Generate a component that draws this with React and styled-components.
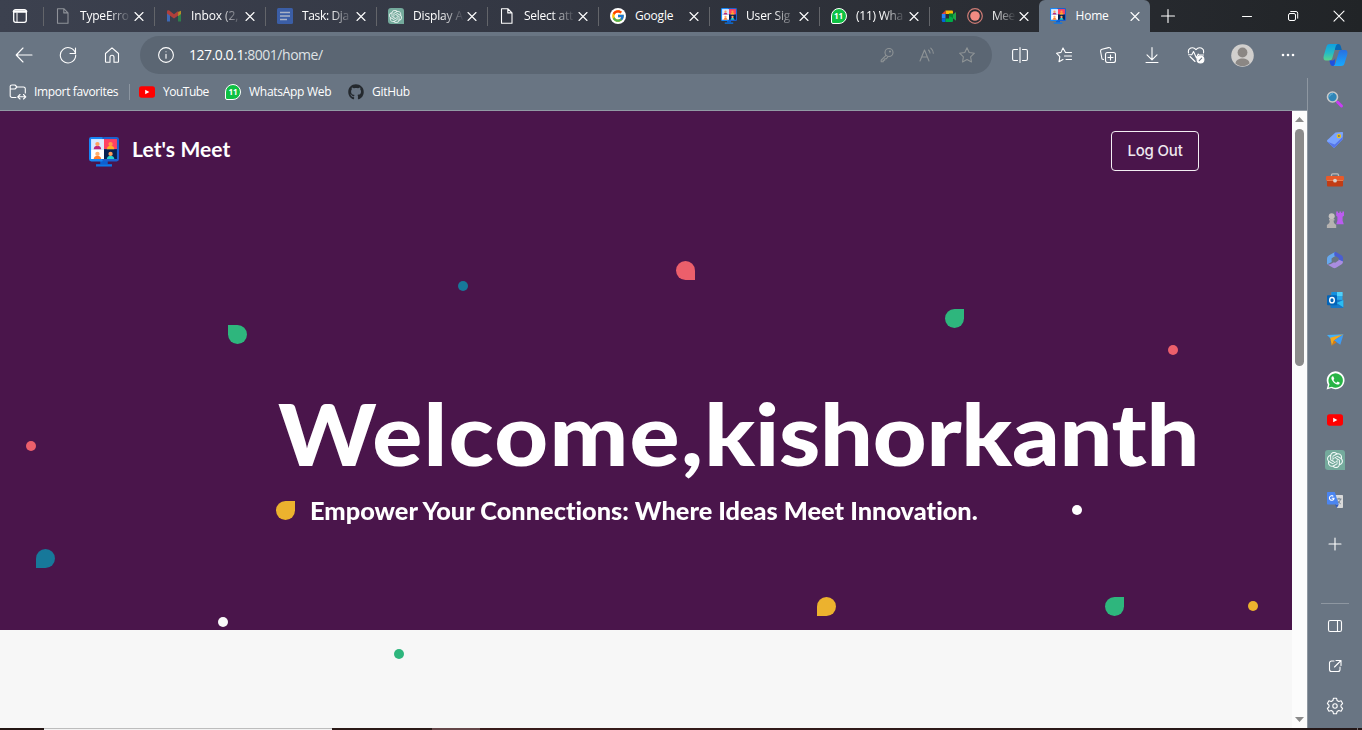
import React from "react";
import styled, { createGlobalStyle } from "styled-components";
import { FaGithub } from "react-icons/fa";
import { FcGoogle } from "react-icons/fc";
import { SiOpenai } from "react-icons/si";

const GlobalStyle = createGlobalStyle`
  *, *::before, *::after { box-sizing: border-box; }
  html, body { margin: 0; padding: 0; overflow: hidden; }
  body { font-family: "Open Sans", "Noto Sans", sans-serif; font-size: 12px; color: #fff; }
  svg { display: block; flex: none; }
  h1, p { margin: 0; }
`;

const Browser = styled.div`
  display: flex;
  flex-direction: column;
  width: 1362px;
  height: 730px;
  background: #697583;
`;

/* ---------- tab strip ---------- */
const TabStrip = styled.header`
  display: flex;
  height: 32px;
  background: linear-gradient(90deg, #3c414f 0%, #343844 35%, #2b2e35 70%, #212427 100%);
`;
const TabActions = styled.div`
  display: flex;
  align-items: center;
  width: 43px;
  padding-left: 12px;
`;
const Tab = styled.div`
  display: flex;
  align-items: center;
  flex: none;
  width: ${(p) => p.$w ?? 111}px;
  height: 32px;
  padding: 0 9px 0 ${(p) => (p.$active ? 11 : 11.5)}px;
  position: relative;
  background: ${(p) => (p.$active ? "#697583" : "transparent")};
  border-radius: ${(p) => (p.$active ? "6px 6px 0 0" : "0")};
  &::before {
    content: "";
    position: absolute;
    left: 0;
    top: 7px;
    width: 1px;
    height: 19px;
    background: ${(p) => (p.$active ? "transparent" : "#63656a")};
  }
`;
const TabTitle = styled.span`
  flex: 1;
  min-width: 0;
  margin-left: 9.5px;
  white-space: nowrap;
  line-height: 18px;
  letter-spacing: ${(p) => p.$ls ?? -0.3}px;
  mask-image: ${(p) => (p.$fade ? "linear-gradient(90deg, #000 calc(100% - 22px), transparent calc(100% + 1px))" : "none")};
`;
const TabClose = styled.span`
  display: flex;
  width: 12px;
  margin-left: 3px;
`;
const TabIcons = styled.span`
  display: flex;
  flex: none;
  gap: 10px;
`;
const NewTab = styled.div`
  display: flex;
  align-items: center;
  justify-content: center;
  width: 35px;
`;
const WindowControls = styled.div`
  display: flex;
  margin-left: auto;
`;
const WindowButton = styled.div`
  display: flex;
  align-items: center;
  justify-content: center;
  width: 46px;
`;

/* ---------- toolbar ---------- */
const Toolbar = styled.div`
  display: flex;
  align-items: center;
  height: 46px;
  padding-left: 2px;
`;
const ToolButton = styled.div`
  display: flex;
  align-items: center;
  justify-content: center;
  width: ${(p) => p.$w ?? 44}px;
  height: 38px;
`;
const AddressBar = styled.div`
  display: flex;
  align-items: center;
  width: 852px;
  height: 38px;
  margin: 0 6px 0 6px;
  padding: 0 5px 0 18px;
  border-radius: 19px;
  background: #5b6673;
`;
const Url = styled.span`
  flex: 1;
  margin-left: 15px;
  font-size: 14px;
  line-height: 20px;
  letter-spacing: -0.46px;
  color: #dfe2e5;
  b { font-weight: 400; color: #fff; }
`;

/* ---------- body ---------- */
const Body = styled.div`
  display: flex;
  height: 650px;
`;
const Main = styled.div`
  display: flex;
  flex-direction: column;
  width: 1307px;
`;
const Favorites = styled.nav`
  display: flex;
  align-items: center;
  height: 33px;
  padding: 0 0 5px 9px;
  border-bottom: 1px solid #919aa4;
`;
const Favorite = styled.div`
  display: flex;
  align-items: center;
  gap: ${(p) => p.$gap ?? 8}px;
  width: ${(p) => p.$w}px;
  white-space: nowrap;
  line-height: 18px;
  letter-spacing: ${(p) => p.$ls}px;
`;
const FavDivider = styled.span`
  width: 1px;
  height: 16px;
  margin-right: 9px;
  background: #8b95a0;
`;
const Viewport = styled.div`
  display: flex;
  height: 617px;
`;
const Page = styled.main`
  position: relative;
  width: 1292px;
  background: #f7f7f7;
`;
const Hero = styled.section`
  height: 519px;
  background: #4a154b;
`;
const SiteHeader = styled.div`
  display: flex;
  align-items: center;
  justify-content: space-between;
  height: 60px;
  padding: 20px 93px 0 89px;
`;
const Brand = styled.div`
  display: flex;
  align-items: center;
  gap: 13px;
  padding-top: 1px;
  font: 700 21px/30px Lato, sans-serif;
  letter-spacing: 0.1px;
`;
const BrandName = styled.span`
  padding-bottom: 5px;
`;
const LogOut = styled.div`
  display: flex;
  align-items: center;
  justify-content: center;
  width: 88px;
  height: 40px;
  border: 1px solid #f3eef3;
  border-radius: 4px;
  font: 500 15px/20px Inter, sans-serif;
  letter-spacing: -0.2px;
  color: #eee8ee;
`;
const Welcome = styled.h1`
  margin: 207px 0 0 278px;
  font: 900 86px/110px Lato, sans-serif;
  font-variant-ligatures: none;
  letter-spacing: 1.2px;
  white-space: nowrap;
  transform: scaleX(1.086);
  transform-origin: 0 0;
`;
const UserName = styled.span`
  letter-spacing: -0.25px;
`;
const Tagline = styled.p`
  margin: 7px 0 0 310px;
  font: 900 24px/32px Lato, sans-serif;
  font-variant-ligatures: none;
  white-space: nowrap;
  transform: scaleX(1.056);
  transform-origin: 0 0;
`;
const corners = { tl: "0 50% 50% 50%", tr: "50% 0 50% 50%", br: "50% 50% 0 50%", bl: "50% 50% 50% 0" };
const Confetti = styled.i`
  position: absolute;
  left: ${(p) => p.$x}px;
  top: ${(p) => p.$y}px;
  width: ${(p) => (p.$corner ? 19 : 10)}px;
  height: ${(p) => (p.$corner ? 19 : 10)}px;
  background: ${(p) => p.$color};
  border-radius: ${(p) => (p.$corner ? corners[p.$corner] : "50%")};
`;
const Scrollbar = styled.div`
  display: flex;
  flex-direction: column;
  align-items: center;
  width: 15px;
  padding: 6px 0 6px;
  background: #fcfcfc;
`;
const Thumb = styled.div`
  width: 9px;
  height: 237px;
  margin: 7px 0 auto;
  border-radius: 5px;
  background: #8b8b8b;
`;

/* ---------- sidebar ---------- */
const Sidebar = styled.aside`
  display: flex;
  flex-direction: column;
  align-items: center;
  width: 55px;
  padding-top: 2px;
  border-left: 1px solid #8e97a1;
`;
const SideItem = styled.div`
  display: flex;
  align-items: center;
  justify-content: center;
  width: 40px;
  height: 40px;
`;
const SideRule = styled.div`
  width: 28px;
  height: 1px;
  margin: 39px 0 2px;
  background: #8e97a1;
`;
const SideAdd = styled(SideItem)`
  margin-top: 4px;
`;
const GptTile = styled.span`
  display: flex;
  align-items: center;
  justify-content: center;
  width: ${(p) => p.$s}px;
  height: ${(p) => p.$s}px;
  border-radius: 3px 3px 0 3px;
  background: #74aa9c;
`;
const GoogleTile = styled.span`
  display: flex;
  align-items: center;
  justify-content: center;
  width: 16px;
  height: 16px;
  border-radius: 50%;
  background: #fff;
`;

/* ---------- taskbar edge ---------- */
const Taskbar = styled.footer`
  display: flex;
  height: 2px;
`;
const TaskSegment = styled.span`
  width: ${(p) => p.$w}px;
  background: ${(p) => p.$c};
`;

/* ---------- icons ---------- */
const Line = ({ s = 16, w = 1.1, c = "#fff", children }) => (
  <svg width={s} height={s} viewBox={`0 0 ${s} ${s}`} fill="none" stroke={c} strokeWidth={w} strokeLinecap="round" strokeLinejoin="round">
    {children}
  </svg>
);
const CloseIcon = () => (
  <Line s={12}><path d="M2 2.500l8 8M10 2.500l-8 8" /></Line>
);
const FileIcon = ({ c }) => (
  <Line c={c}><path d="M2.500.7h6.300l4.200 4.200v10.400H2.500zM8.800.7v4.200H13" /></Line>
);
const GmailIcon = () => (
  <svg width="16" height="16" viewBox="0 0 16 16">
    <path d="M1 4v9.5h3V7z" fill="#3f69b4" />
    <path d="M12 7v6.5h3V4z" fill="#2f7d4b" />
    <path d="M12 4l3-1.2V6l-3 2.3z" fill="#b58d28" />
    <path d="M1 3.5C1 2.3 2.6 2 3.5 2.8L8 6.2l4.2-3.3v4.6L8 10.6 1 5.5z" fill="#b03f3b" />
  </svg>
);
const DocsIcon = () => (
  <svg width="16" height="16" viewBox="0 0 16 16">
    <rect width="16" height="16" rx="1.5" fill="#3b5ea6" />
    <path d="M3 4.500h10M3 8h10M3 11.500h7" stroke="#a9b2c6" strokeWidth="1.500" />
  </svg>
);
const MeetingIcon = ({ s = 16 }) => (
  <svg width={s} height={s} viewBox="0 0 32 32">
    <path d="M12 24h8v5H12z" fill="#0b5fd0" />
    <path d="M7.500 29h17v2.500H7.500z" fill="#0a78ea" />
    <rect x="0" y="0" width="16" height="26" rx="2.500" fill="#1787f5" />
    <rect x="14" y="0" width="18" height="26" rx="2.500" fill="#1b5fce" />
    <path d="M2.200 2.200H16V13H2.200z" fill="#dbeaff" />
    <path d="M16 2.200h13.800V13H16z" fill="#ff4162" />
    <path d="M2.200 13H16v10.500H2.200z" fill="#fff" />
    <path d="M16 13h13.800v10.500H16z" fill="#061f50" />
    <path d="M5 13c0-4.800 8-4.800 8 0z" fill="#b8267b" />
    <path d="M19 13c0-4.800 8-4.800 8 0z" fill="#ffb020" />
    <path d="M5 23.500c0-4.800 8-4.800 8 0z" fill="#ff7d2b" />
    <path d="M19 23.500c0-4.800 8-4.800 8 0z" fill="#23d2d0" />
    <circle cx="9" cy="7.500" r="2.300" fill="#ffa05c" />
    <circle cx="23" cy="7.500" r="2.300" fill="#ff9a45" />
    <circle cx="9" cy="18" r="2.300" fill="#ffb070" />
    <circle cx="23" cy="18" r="2.300" fill="#ffa05c" />
  </svg>
);
const WaBadge = styled.span`
  display: flex;
  flex: none;
  align-items: center;
  justify-content: center;
  width: 16px;
  height: 16px;
  border: 1.5px solid #fff;
  border-radius: 50% 50% 50% 2px;
  background: #0ec143;
  font: 700 8px/12px "Open Sans", sans-serif;
  letter-spacing: 0;
`;
const MeetIcon = () => (
  <svg width="16" height="16" viewBox="0 0 16 16">
    <path d="M4.500 2.500H11a1 1 0 011 1V6H4.500z" fill="#fbbc04" />
    <path d="M4.500 2.500V6H.8z" fill="#ea4335" />
    <path d="M.8 6h3.700v4.500H.8z" fill="#2684fc" />
    <path d="M.8 10.500h3.700v3.500H2a1.200 1.200 0 01-1.200-1.200z" fill="#0066da" />
    <path d="M4.500 10.500H8V8h4v5a1 1 0 01-1 1H4.500z" fill="#00ac47" />
    <path d="M8 5.500h4V10l-4-2z" fill="#00832d" />
    <path d="M12 6.500l3-2.600v8.800l-3-2.500z" fill="#1fa54a" />
  </svg>
);
const RecordIcon = () => (
  <svg width="16" height="16" viewBox="0 0 16 16">
    <circle cx="8" cy="8" r="7.300" fill="none" stroke="#cf7c75" strokeWidth="1.200" />
    <circle cx="8" cy="8" r="4.800" fill="#f28b82" />
  </svg>
);
const YouTubeIcon = () => (
  <svg width="16" height="16" viewBox="0 0 16 16">
    <rect y="2.300" width="16" height="11.400" rx="2.600" fill="#f00" />
    <path d="M6.200 5.700v4.600L10.300 8z" fill="#fff" />
  </svg>
);
const Avatar = () => (
  <svg width="23" height="23" viewBox="0 0 23 23">
    <circle cx="11.500" cy="11.500" r="11.300" fill="#d1cfcd" />
    <circle cx="11.500" cy="8.500" r="4.900" fill="#8b8784" />
    <path d="M4.500 19.500c0-6.800 14-6.800 14 0-3.800 3.400-10.200 3.400-14 0z" fill="#8b8784" />
  </svg>
);
const Copilot = () => (
  <svg width="25" height="24" viewBox="0 0 25 24">
    <defs>
      <linearGradient id="cpA" x1="0" y1="0" x2="0" y2="1">
        <stop offset="0" stopColor="#0f9fe0" /><stop offset=".5" stopColor="#22b9c9" /><stop offset="1" stopColor="#58d58b" />
      </linearGradient>
      <linearGradient id="cpB" x1="0" y1="0" x2="0" y2="1">
        <stop offset="0" stopColor="#2a6fe0" /><stop offset="1" stopColor="#16a9ff" />
      </linearGradient>
    </defs>
    <path d="M12 1h3c2 0 2.500 1 3 3l.8 3H12z" fill="#0868b5" />
    <path d="M7 1h8c-1.300.3-2 1.200-2.500 3l-3 10.500c-.6 2.200-1.400 3-3 3H3C.8 17.500.1 15.500.7 13L3.500 3.500C4 1.800 5 1 7 1z" fill="url(#cpA)" />
    <path d="M6.400 17.500H9c1.700 0 2.600-.7 3.200-2.300L11.500 23H10c-2 0-2.500-1-3-3z" fill="#1f50e0" />
    <path d="M18 23h-8c1.300-.3 2-1.200 2.500-3l3-10c.6-2.200 1.400-3 3-3H22c2.200 0 2.900 2 2.300 4.500L21.500 20.500C21 22.200 20 23 18 23z" fill="url(#cpB)" />
  </svg>
);
const SearchIcon = () => (
  <svg width="18" height="18" viewBox="0 0 18 18">
    <path d="M11.500 11l4 4" stroke="#c93cf5" strokeWidth="3" strokeLinecap="round" />
    <circle cx="6.500" cy="6" r="5" fill="#2f86b8" stroke="#c9c9c9" strokeWidth="1.600" />
    <path d="M3.600 5.500A3.300 3.300 0 017 2.700" stroke="#67b4dc" fill="none" />
  </svg>
);
const TagIcon = () => (
  <svg width="18" height="18" viewBox="0 0 18 18">
    <path d="M9.500 1.600L16 1c.7 0 1 .3 1 1l-.5 6.500-7.300 7.600c-.8.8-1.600.8-2.400 0L1.600 11c-.8-.8-.8-1.500 0-2.300z" fill="#7aa4ff" />
    <path d="M1.500 10.800l5.300 5.300c.8.8 1.600.8 2.400 0l7.300-7.600.2-2.500-8 7.500z" fill="#5676ea" />
    <circle cx="12.900" cy="5" r="1.600" fill="#5f7081" stroke="#f2c115" strokeWidth="1.300" />
  </svg>
);
const ToolboxIcon = () => (
  <svg width="18" height="18" viewBox="0 0 18 18">
    <path d="M5.500 5.500V4c0-.8.400-1.200 1.200-1.200h4.600c.8 0 1.200.4 1.200 1.200v1.500" fill="none" stroke="#bbb" strokeWidth="1.300" />
    <rect y="5" width="18" height="4.700" rx="1.200" fill="#e75a2b" />
    <path d="M1 9.700h16v4.600c0 .8-.4 1.200-1.200 1.200H2.200c-.8 0-1.200-.4-1.200-1.200z" fill="#c23c14" />
    <path d="M1 9.500h16" stroke="#f58a58" strokeWidth=".7" />
    <circle cx="9" cy="9.700" r="1.900" fill="#d8d2ce" />
  </svg>
);
const GamesIcon = () => (
  <svg width="18" height="18" viewBox="0 0 18 18">
    <path d="M10.200.5h1.900v1.500h1.300V.5h1.800v1.500h1.100V.5H18v4.300l-1.400 1v4l1.200 3.400h-7.600l1.200-3.400v-4l-1.200-1z" fill="#bb5cf0" />
    <circle cx="5.700" cy="5.300" r="3" fill="#c4c1bf" />
    <path d="M3 8h5.500v1.500h-.9c0 2.300.8 3.300 2.600 4.500v3H.9v-3c1.900-1.200 2.900-2.200 2.900-4.500H3z" fill="#b5b2b0" />
  </svg>
);
const M365Icon = () => (
  <svg width="18" height="18" viewBox="0 0 18 18">
    <path d="M9.500.7L3.200 4.300C1.800 5.200 1 6 1 8v5.500L5.700 11V7.400l5-3z" fill="#66a8ee" />
    <path d="M9.500.7l5.800 3.500c1.200.8 1.700 1.700 1.700 3v4.500l-4.500-2.200V7L8.300 4.500V1.200z" fill="#4a5ed0" />
    <path d="M17 10.500c0 1.600-.6 2.400-1.700 3L10 16.800c-1 .6-2 .5-3 0L1 13.300c1.500.6 3.300.3 4.700-.8l6.800-4z" fill="#a98de0" />
    <path d="M5.800 7.300L9.200 5.300l3.300 2v2.300L9.200 11.700l-3.400-1.200z" fill="#697583" />
  </svg>
);
const OutlookIcon = () => (
  <svg width="18" height="18" viewBox="0 0 18 18">
    <rect x="5.500" y="1" width="11" height="12" rx="1" fill="#28a8ea" />
    <path d="M11 1h5.500v4H11z" fill="#50d0fa" />
    <path d="M5.500 1H11v4H5.500z" fill="#1490df" />
    <path d="M4.500 8.500l12.800.5v7c0 .6-.4 1-1 1H5.500c-.6 0-1-.4-1-1z" fill="#1678c8" />
    <path d="M17.300 9v7.300L10.500 12z" fill="#2bbcf2" />
    <rect x="1" y="4.200" width="10" height="10" rx="1" fill="#0364b8" />
    <ellipse cx="6" cy="9.200" rx="2.300" ry="2.700" fill="none" stroke="#fff" strokeWidth="1.400" />
  </svg>
);
const DropIcon = () => (
  <svg width="18" height="18" viewBox="0 0 18 18">
    <path d="M1 4L17.500 3.200 5 8z" fill="#45b0f7" />
    <path d="M4.300 6.800L17.500 3.200 8 9.500 5.800 14.800z" fill="#f6a91b" />
    <path d="M8 9.500l9.500-6.300-3.200 10.600z" fill="#3f9cf3" />
    <path d="M5.800 14.800L8 9.500l2.600 1.700z" fill="#d77b10" />
  </svg>
);
const WhatsAppIcon = () => (
  <svg width="19" height="19" viewBox="0 0 19 19">
    <path d="M.6 18.400l1.300-4.700A8.900 8.900 0 115.200 17z" fill="#fff" />
    <path d="M2.600 16.400l.9-3.200a7.200 7.200 0 112.500 2.500z" fill="#28b446" />
    <path d="M6.600 5.200c-1.300.6-1.500 2-.8 3.600 1 2.200 2.800 4 5.200 4.700 1.400.4 2.600-.4 2.800-1.800l-2.100-1.100-1.100 1.200c-1.500-.6-2.500-1.600-3.100-2.900l.8-1.100-.9-2.300z" fill="#fff" />
  </svg>
);
const TranslateIcon = () => (
  <svg width="18" height="18" viewBox="0 0 18 18">
    <path d="M7 4h9c.6 0 1 .4 1 1v11c0 .6-.4 1-1 1h-5z" fill="#d9d9d9" />
    <path d="M10.500 8h5M13 6.800V8m1.500 0c-.5 2-1.500 3.500-3 4.600M11.500 9.500c.7 1.500 1.800 2.500 3.200 3.300" stroke="#6d7b86" fill="none" strokeWidth=".9" />
    <path d="M2 1h6.800l4 12.500H2c-.6 0-1-.4-1-1V2c0-.6.400-1 1-1z" fill="#4b85f0" />
    <path d="M9 13.500h3.800L10.800 17z" fill="#2e59be" />
    <path d="M7.300 5.300a2.300 2.300 0 10.700 2H5.700" stroke="#fff" fill="none" strokeWidth="1.100" />
  </svg>
);

const tabs = [
  { title: "TypeErro", icon: <FileIcon c="#8f9299" />, ls: -0.2, fade: true },
  { title: "Inbox (2,", icon: <GmailIcon />, ls: -0.1, fade: true },
  { title: "Task: Dja", icon: <DocsIcon />, ls: -0.35, fade: true },
  { title: "Display A", icon: <GptTile $s={16}><SiOpenai size={13} color="#e9f3f0" /></GptTile>, ls: -0.15, fade: true },
  { title: "Select att", icon: <FileIcon c="#fff" />, ls: -0.25, fade: true },
  { title: "Google", icon: <GoogleTile><FcGoogle size={14} /></GoogleTile>, ls: -0.2 },
  { title: "User Sig", icon: <MeetingIcon />, ls: -0.15, fade: true, w: 110 },
  { title: "(11) Wha", icon: <WaBadge>11</WaBadge>, ls: -0.25, fade: true, w: 110 },
  { title: "Mee", icon: <TabIcons><MeetIcon /><RecordIcon /></TabIcons>, ls: -0.5, fade: true, w: 110 },
];

const confetti = [
  { x: 228, y: 214, color: "#2eb67d", corner: "tl" },
  { x: 676, y: 150, color: "#ec5f6b", corner: "br" },
  { x: 945, y: 198, color: "#2eb67d", corner: "tr" },
  { x: 276, y: 390, color: "#ecb22e", corner: "tr" },
  { x: 36, y: 438, color: "#17789a", corner: "bl" },
  { x: 817, y: 486, color: "#ecb22e", corner: "bl" },
  { x: 1105, y: 486, color: "#2eb67d", corner: "tr" },
  { x: 458, y: 170, color: "#17789a" },
  { x: 1168, y: 234, color: "#ec5f6b" },
  { x: 26, y: 330, color: "#ec5f6b" },
  { x: 1072, y: 394, color: "#fff" },
  { x: 218, y: 506, color: "#fafafa" },
  { x: 1248, y: 490, color: "#ecb22e" },
  { x: 394, y: 538, color: "#2eb67d" },
];

const sideApps = [
  <SearchIcon />, <TagIcon />, <ToolboxIcon />, <GamesIcon />, <M365Icon />, <OutlookIcon />, <DropIcon />,
  <WhatsAppIcon />, <YouTubeIcon />, <GptTile $s={20}><SiOpenai size={16} color="#f3faf8" /></GptTile>, <TranslateIcon />,
];

export default function App() {
  return (
    <Browser>
      <GlobalStyle />
      <TabStrip>
        <TabActions>
          <Line w={1.3}><rect x="1.700" y="1.700" width="12.600" height="12.600" rx="2" /><path d="M2 3.500h12" strokeWidth="2.600" /><path d="M5 5v9" strokeWidth="1" /></Line>
        </TabActions>
        {tabs.map((t) => (
          <Tab key={t.title} $w={t.w}>
            {t.icon}
            <TabTitle $ls={t.ls} $fade={t.fade}>{t.title}</TabTitle>
            <TabClose><CloseIcon /></TabClose>
          </Tab>
        ))}
        <Tab $active>
          <MeetingIcon />
          <TabTitle $ls={-0.2}>Home</TabTitle>
          <TabClose><CloseIcon /></TabClose>
        </Tab>
        <NewTab><Line><path d="M8 1.500v13M1.500 8h13" /></Line></NewTab>
        <WindowControls>
          <WindowButton><Line s={12}><path d="M1.500 6.500h9" /></Line></WindowButton>
          <WindowButton><Line s={12} w={1}><rect x="1.500" y="3.500" width="7" height="7" rx="1.500" /><path d="M3.700 1.500H9a1.700 1.700 0 011.700 1.700v5" /></Line></WindowButton>
          <WindowButton><Line s={12}><path d="M1 1.200l10 10M11 1.200l-10 10" /></Line></WindowButton>
        </WindowControls>
      </TabStrip>

      <Toolbar>
        <ToolButton><Line s={18}><path d="M17 9H1.500M8 2L1.200 9 8 16" /></Line></ToolButton>
        <ToolButton><Line s={18}><path d="M16.500 7.500A7.700 7.700 0 1016.700 9M16.500 2v5.500H11" /></Line></ToolButton>
        <ToolButton><Line s={18}><path d="M2.500 7.500L9 1.800l6.500 5.700v8a.8.8 0 01-.8.8H11v-5a2 2 0 00-4 0v5H3.300a.8.800 0 01-.8-.8z" /></Line></ToolButton>
        <AddressBar>
          <Line><circle cx="8" cy="8" r="7.400" /><path d="M8 7.300v4M8 4.700v.1" /></Line>
          <Url><b>127.0.0.1</b>:8001/home/</Url>
          <ToolButton $w={40}><Line c="#8f9496"><circle cx="10" cy="5.500" r="4" /><circle cx="11" cy="4.500" r=".5" /><path d="M7 8.300l-4.800 4.800v1.700h2v-1.500h1.500v-1.500h1.500L8.800 10" /></Line></ToolButton>
          <ToolButton $w={40}><Line c="#8f9496"><path d="M1 14L5.500 3l4.500 11M2.700 10h5.700M9.500 3c1 .9 1.400 1.800 1.500 3M11.800 1.200c1.600 1.400 2.400 3 2.500 5" /></Line></ToolButton>
          <ToolButton $w={40}><Line c="#8f9496"><path d="M8 .8l2.200 4.700 5.200.7-3.800 3.600.9 5.200L8 12.500 3.500 15l.9-5.200L.6 6.200l5.200-.7z" /></Line></ToolButton>
        </AddressBar>
        <ToolButton $w={43}><Line><path d="M5.500 2.500H2A1.400 1.400 0 00.6 3.900v8.200A1.400 1.400 0 002 13.500h3.500M10.500 2.500H14a1.400 1.400 0 011.400 1.400v8.200a1.400 1.400 0 01-1.400 1.400h-3.500M8 .6v14.800" /></Line></ToolButton>
        <ToolButton $w={45}><Line><path d="M9.500 5.500L7 .9 5 5.400l-4.500.8 3.300 3.500L3 14.800l4-2.200M10 5.500h5.500M8.500 9h7M10 12.500h5.500" /></Line></ToolButton>
        <ToolButton><Line><rect x="5.500" y="5.500" width="10" height="10" rx="2" /><path d="M10.500 8v5M8 10.500h5M3.500 12.500L2 12 .6 4.500C.4 3.300 1 2.500 2 2.200L8.500.6c1.200-.2 2 .4 2.500 1.600" /></Line></ToolButton>
        <ToolButton><Line><path d="M8 .6v12M3 7.800l5 5 5-5M2 15.500h12" /></Line></ToolButton>
        <ToolButton>
          <Line s={18}>
            <path d="M1.500 7C.5 2 6 0 9 3.600 12 0 17.500 2 16.500 7M3 10.500l5 5M1.500 8.700h3.300L6.500 5.500l3 6.500 1.700-4 .8 1h4.500" />
            <circle cx="13.500" cy="13.500" r="3.400" fill="#fff" /><path d="M12.200 14.700l2.500-2.500" stroke="#697583" />
          </Line>
        </ToolButton>
        <ToolButton $w={48}><Avatar /></ToolButton>
        <ToolButton><svg width="16" height="4" viewBox="0 0 16 4" fill="#fff"><circle cx="3" cy="2" r="1.300" /><circle cx="8" cy="2" r="1.300" /><circle cx="13" cy="2" r="1.300" /></svg></ToolButton>
        <ToolButton $w={50}><Copilot /></ToolButton>
      </Toolbar>

      <Body>
        <Main>
          <Favorites>
            <Favorite $w={120} $ls={-0.36} $gap={7}>
              <Line s={18}><path d="M7 14.500H3a1.800 1.800 0 01-1.800-1.800V3.300C1.200 2.400 1.900 2 3 2h3l2 2h6.500A1.800 1.800 0 0116.300 6v4M1.500 6H6l2-2M9 13.800h7.500M11 11.500l-2.300 2.300L11 16M14.500 11.500l2.300 2.300-2.300 2.200" /></Line>
              Import favorites
            </Favorite>
            <FavDivider />
            <Favorite $w={86} $ls={-0.5}><YouTubeIcon />YouTube</Favorite>
            <Favorite $w={123} $ls={-0.28}><WaBadge>11</WaBadge>WhatsApp Web</Favorite>
            <Favorite $w={70} $ls={-0.3}><FaGithub size={16} color="#24292e" />GitHub</Favorite>
          </Favorites>
          <Viewport>
            <Page>
              <Hero>
                <SiteHeader>
                  <Brand><MeetingIcon s={30} /><BrandName>Let's Meet</BrandName></Brand>
                  <LogOut>Log Out</LogOut>
                </SiteHeader>
                <Welcome>Welcome,<UserName>kishorkanth</UserName></Welcome>
                <Tagline>Empower Your Connections: Where Ideas Meet Innovation.</Tagline>
              </Hero>
              {confetti.map((c) => (
                <Confetti key={`${c.x}-${c.y}`} $x={c.x} $y={c.y} $color={c.color} $corner={c.corner} />
              ))}
            </Page>
            <Scrollbar>
              <svg width="9" height="5" viewBox="0 0 9 5"><path d="M0 5l4.500-5L9 5z" fill="#8b8b8b" /></svg>
              <Thumb />
              <svg width="9" height="5" viewBox="0 0 9 5"><path d="M0 0l4.500 5L9 0z" fill="#8b8b8b" /></svg>
            </Scrollbar>
          </Viewport>
        </Main>
        <Sidebar>
          {sideApps.map((icon, i) => <SideItem key={i}>{icon}</SideItem>)}
          <SideAdd><Line s={14}><path d="M7 1v12M1 7h12" /></Line></SideAdd>
          <SideRule />
          <SideItem><Line><rect x="1.500" y="2.500" width="13" height="11" rx="1.800" /><path d="M10.500 2.500v11" /></Line></SideItem>
          <SideItem><Line><path d="M7 3H4.500A2 2 0 002.500 5v6.500a2 2 0 002 2H11a2 2 0 002-2V9M9 2.500h5v5M14 2.500L7.500 9" /></Line></SideItem>
          <SideItem>
            <Line s={18}>
              <path d="M7.500 1.200h3l.6 2.300 1.700 1 2.300-.7 1.500 2.700L15 8.100v1.800l1.600 1.600-1.500 2.700-2.300-.7-1.700 1-.6 2.300h-3l-.6-2.300-1.700-1-2.300.7-1.500-2.700L3 9.900V8.100L1.400 6.500l1.500-2.700 2.300.7 1.700-1z" />
              <circle cx="9" cy="9" r="2.200" />
            </Line>
          </SideItem>
        </Sidebar>
      </Body>
      <Taskbar>
        <TaskSegment $w={44} $c="#241614" />
        <TaskSegment $w={288} $c="linear-gradient(#bdbdbd 50%, #f3f3f3 50%)" />
        <TaskSegment $w={100} $c="#2b1a18" />
        <TaskSegment $w={48} $c="#654749" />
        <TaskSegment $w={877} $c="linear-gradient(90deg, #3a1c1b, #241818)" />
        <TaskSegment $w={1} $c="#7a6c6a" />
        <TaskSegment $w={4} $c="#241818" />
      </Taskbar>
    </Browser>
  );
}
